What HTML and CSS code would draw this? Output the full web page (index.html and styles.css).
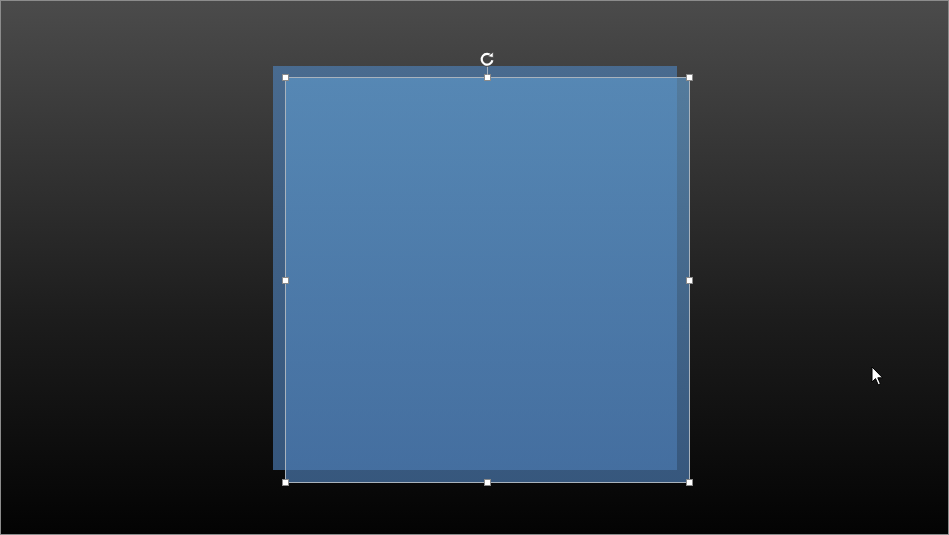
FILE: index.html
```html
<!DOCTYPE html>
<html lang="en">
<head>
    <meta charset="UTF-8">
    <title>Slide editor</title>
    <link rel="stylesheet" href="styles.css">
</head>
<body>
    <div class="slide">
        <div class="shape shape-back"></div>
        <div class="shape shape-front">
            <span class="handle h-tl"></span>
            <span class="handle h-tc"></span>
            <span class="handle h-tr"></span>
            <span class="handle h-ml"></span>
            <span class="handle h-mr"></span>
            <span class="handle h-bl"></span>
            <span class="handle h-bc"></span>
            <span class="handle h-br"></span>
            <span class="rotate-stem"></span>
            <svg class="rotate" width="18" height="18" viewBox="0 0 18 18">
                <path d="M13.4 6 A5.4 5.4 0 1 0 14.4 10.2" fill="none" stroke="#444" stroke-width="4"/>
                <path d="M13.4 6 A5.4 5.4 0 1 0 14.4 10.2" fill="none" stroke="#fff" stroke-width="2.2"/>
                <path d="M9.8 6.4 L15.2 7.6 L15.2 2 Z" fill="#fff" stroke="#444" stroke-width="0.8"/>
            </svg>
        </div>
        <svg class="cursor" width="14" height="22" viewBox="0 0 14 22">
            <path d="M1 1 L1 16 L4.5 12.6 L7.2 18.8 L9.4 17.8 L6.8 11.8 L11.6 11.8 Z" fill="#fff" stroke="#000" stroke-width="1"/>
        </svg>
    </div>
</body>
</html>
```

FILE: styles.css
```css
/* slide canvas */
body {
    margin: 0;
    padding: 0;
    background-color: #000;
}
.slide {
    position: relative;
    width: 947px;
    height: 533px;
    border: 1px solid #8c8c8c;
    background: linear-gradient(#4b4b4b, #1c1c1c 60%, #030303);
    overflow: hidden;
}
.shape {
    position: absolute;
    box-sizing: border-box;
    width: 404px;
    height: 404px;
}
.shape-back {
    left: 272px;
    top: 65px;
    background: linear-gradient(rgba(76, 124, 176, 0.7), rgba(72, 118, 172, 0.7));
}
.shape-front {
    left: 284px;
    top: 76px;
    width: 405px;
    height: 406px;
    background: linear-gradient(rgba(92, 148, 196, 0.7), rgba(74, 120, 174, 0.7));
    border: 1px solid #a9b3bd;
}
.handle {
    position: absolute;
    width: 5px;
    height: 5px;
    background-color: #fff;
    border: 1px solid #8a8a8a;
    margin: -4px 0 0 -4px;
}
.h-tl { left: 0; top: 0; }
.h-tc { left: 202px; top: 0; }
.h-tr { left: 404px; top: 0; }
.h-ml { left: 0; top: 203px; }
.h-mr { left: 404px; top: 203px; }
.h-bl { left: 0; top: 405px; }
.h-bc { left: 202px; top: 405px; }
.h-br { left: 404px; top: 405px; }
.rotate-stem {
    position: absolute;
    left: 201px;
    top: -12px;
    width: 1px;
    height: 9px;
    background-color: #a9b3bd;
}
.rotate {
    position: absolute;
    left: 192px;
    top: -28px;
}
.cursor {
    position: absolute;
    left: 870px;
    top: 365px;
}
```
